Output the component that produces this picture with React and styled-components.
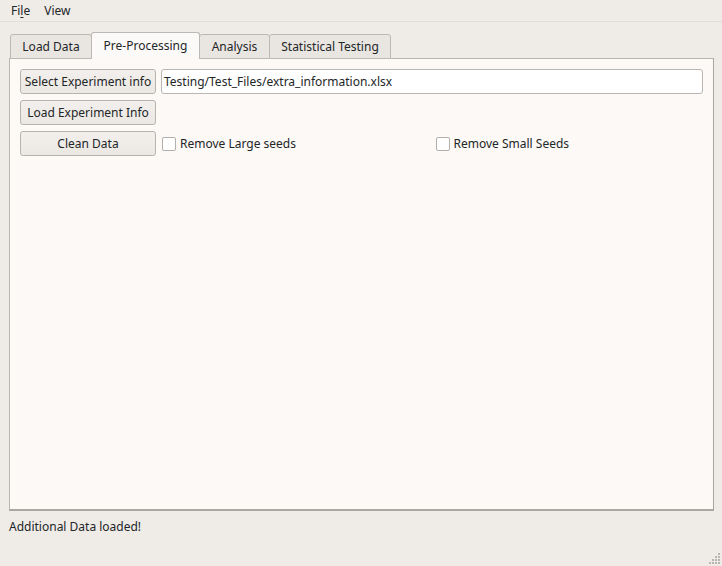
import React from "react";
import styled, { createGlobalStyle } from "styled-components";

const Global = createGlobalStyle`
  html, body { margin: 0; padding: 0; background: #efebe7; }
  body { font-family: "Noto Sans", "DejaVu Sans", sans-serif; font-size: 12px; color: #232627; }
  #root { width: 722px; height: 566px; }
`;

const Window = styled.div`
  width: 722px;
  height: 566px;
  background: #efebe7;
  display: flex;
  flex-direction: column;
  position: relative;
  overflow: hidden;
`;

const MenuBar = styled.div`
  height: 22px;
  display: flex;
  align-items: center;
  padding-left: 4px;
  border-bottom: 1px solid #e2ded9;
  box-sizing: border-box;
`;

const MenuItem = styled.span`
  padding: 0 7px;
  line-height: 20px;
  u { text-decoration: underline; text-underline-offset: 2px; }
`;

const TabArea = styled.div`
  margin: 11px 8px 0 9px;
  display: flex;
  flex-direction: column;
  flex: 0 0 auto;
`;

const TabBar = styled.div`
  display: flex;
  align-items: flex-end;
  height: 26px;
  padding-left: 1px;
  position: relative;
  z-index: 1;
  margin-bottom: -1px;
`;

const Tab = styled.div`
  box-sizing: border-box;
  width: ${(p) => p.$w}px;
  height: ${(p) => (p.$active ? "27px" : "25px")};
  display: flex;
  align-items: center;
  justify-content: center;
  border: 1px solid #bcb8b3;
  border-bottom: ${(p) => (p.$active ? "none" : "1px solid #bcb8b3")};
  border-radius: 3px 3px 0 0;
  background: ${(p) => (p.$active ? "#fcfaf8" : "#e9e5e1")};
  padding-bottom: ${(p) => (p.$active ? "2px" : "0")};
  margin-left: ${(p) => (p.$first ? "0" : "-1px")};
  position: relative;
  z-index: ${(p) => (p.$active ? 2 : 1)};
  white-space: nowrap;
`;

const Pane = styled.div`
  box-sizing: border-box;
  height: 453px;
  background: #fcf9f6;
  border: 1px solid #b9b5b0;
  border-right-color: #a9a5a0;
  border-bottom: 2px solid #aaa6a1;
  padding: 10px 10px;
`;

const Grid = styled.div`
  display: grid;
  grid-template-columns: 136px 1fr 1fr;
  grid-auto-rows: 25px;
  column-gap: 5px;
  row-gap: 6px;
`;

const Button = styled.button`
  font: inherit;
  color: #232627;
  box-sizing: border-box;
  height: 25px;
  width: 136px;
  padding: 0;
  border: 1px solid #b7b3ae;
  border-radius: 3px;
  background: linear-gradient(#f2efec, #ebe8e4);
  display: flex;
  align-items: center;
  justify-content: center;
  white-space: nowrap;
`;

const Input = styled.div`
  grid-column: 2 / span 2;
  box-sizing: border-box;
  height: 25px;
  border: 1px solid #bab6b1;
  border-radius: 3px;
  background: #ffffff;
  display: flex;
  align-items: center;
  padding-left: 2px;
  white-space: nowrap;
`;

const Check = styled.label`
  display: flex;
  align-items: center;
  gap: 4px;
  padding-left: 1px;
`;

const Box = styled.span`
  box-sizing: border-box;
  width: 14px;
  height: 14px;
  border: 1px solid #b3afaa;
  border-radius: 2px;
  background: #ffffff;
  flex: 0 0 auto;
`;

const Status = styled.div`
  padding: 7px 9px 0;
  line-height: 17px;
`;

const Grip = styled.svg`
  position: absolute;
  right: 1px;
  bottom: 1px;
`;

export default function App() {
  const dots = [
    [9, 0],
    [6, 3], [9, 3],
    [3, 6], [6, 6], [9, 6],
    [0, 9], [3, 9], [6, 9], [9, 9],
  ];
  return (
    <>
      <Global />
      <Window>
        <MenuBar>
          <MenuItem>Fi<u>l</u>e</MenuItem>
          <MenuItem>View</MenuItem>
        </MenuBar>
        <TabArea>
          <TabBar>
            <Tab $first $w={82}>Load Data</Tab>
            <Tab $active $w={109}>Pre-Processing</Tab>
            <Tab $w={71}>Analysis</Tab>
            <Tab $w={122}>Statistical Testing</Tab>
          </TabBar>
          <Pane>
            <Grid>
              <Button>Select Experiment info</Button>
              <Input>Testing/Test_Files/extra_information.xlsx</Input>
              <Button>Load Experiment Info</Button>
              <span />
              <span />
              <Button>Clean Data</Button>
              <Check>
                <Box />
                Remove Large seeds
              </Check>
              <Check>
                <Box />
                Remove Small Seeds
              </Check>
            </Grid>
          </Pane>
        </TabArea>
        <Status>Additional Data loaded!</Status>
        <Grip width="12" height="12" viewBox="0 0 12 12">
          {dots.map(([x, y], i) => (
            <rect key={i} x={x} y={y} width="2" height="2" fill="#b9b5b0" />
          ))}
        </Grip>
      </Window>
    </>
  );
}
